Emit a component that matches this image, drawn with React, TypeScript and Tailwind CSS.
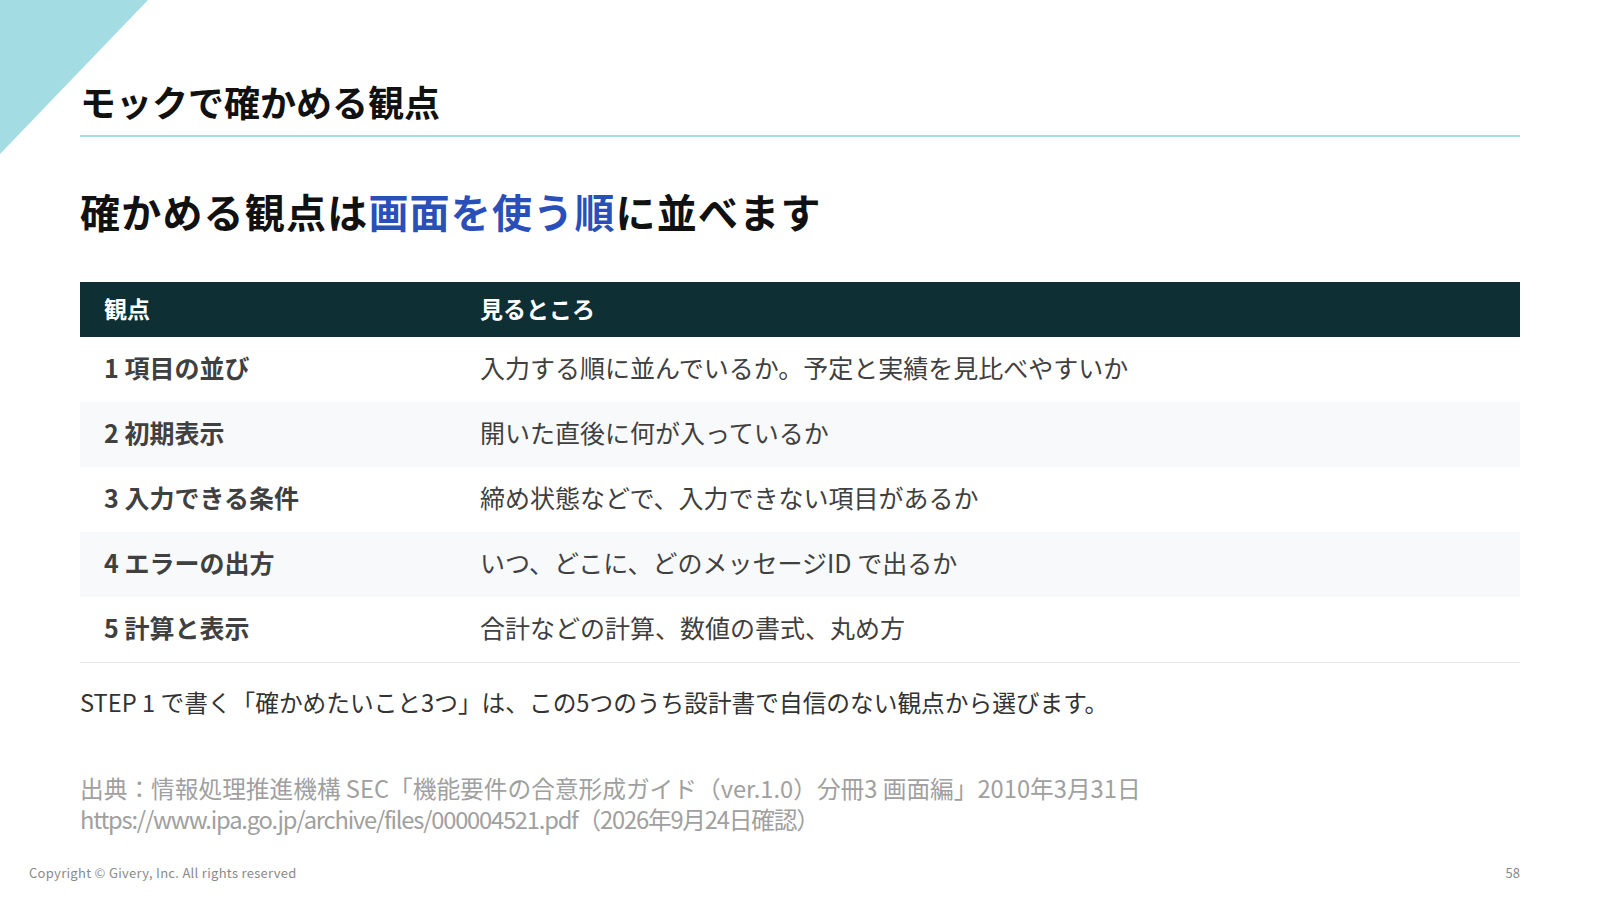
import React from "react";

const rows = [
  { label: "1 項目の並び", detail: "入力する順に並んでいるか。予定と実績を見比べやすいか" },
  { label: "2 初期表示", detail: "開いた直後に何が入っているか" },
  { label: "3 入力できる条件", detail: "締め状態などで、入力できない項目があるか" },
  { label: "4 エラーの出方", detail: "いつ、どこに、どのメッセージID で出るか" },
  { label: "5 計算と表示", detail: "合計などの計算、数値の書式、丸め方" },
];

export default function App() {
  return (
    <div
      className="relative w-[1600px] h-[900px] overflow-hidden bg-white flex flex-col"
      style={{ fontFamily: '"Noto Sans CJK JP", "Noto Sans", sans-serif' }}
    >
      {/* corner accent */}
      <svg className="absolute left-0 top-0" width="150" height="156" viewBox="0 0 150 156">
        <polygon points="0,0 148,0 0,154" fill="#a3dce3" />
      </svg>

      <div className="relative px-[80px] pt-[78px]">
        <h1 className="text-[36px] leading-[46px] font-bold text-[#111]">モックで確かめる観点</h1>
        <div className="mt-[11px] h-[2px] bg-[#aadbe3]" />

        <h2 className="mt-[50px] text-[40px] leading-[48px] font-bold text-[#111] tracking-[1.2px]">
          確かめる観点は<span className="text-[#2b4fb8]">画面を使う順</span>に並べます
        </h2>

        <div className="mt-[47px] border-b border-[#e6e8ea]">
          <div className="flex h-[55px] items-center pb-[2px] bg-[#0e2f33] text-white text-[23px] font-bold">
            <div className="w-[400px] pl-[24px]">観点</div>
            <div>見るところ</div>
          </div>
          {rows.map((r, i) => (
            <div
              key={r.label}
              className={`flex h-[65px] items-center pb-[4px] text-[25px] text-[#404040] ${i % 2 === 1 ? "bg-[#f8f9fa]" : "bg-white"}`}
            >
              <div className="w-[400px] pl-[24px] font-bold">{r.label}</div>
              <div>{r.detail}</div>
            </div>
          ))}
        </div>

        <p className="mt-[23px] text-[23.7px] leading-[32px] text-[#333]">
          STEP 1 で書く「確かめたいこと3つ」は、この5つのうち設計書で自信のない観点から選びます。
        </p>

        <div className="mt-[55px] text-[23.7px] leading-[31px] text-[#a0a0a0]">
          <p>出典：情報処理推進機構 SEC「機能要件の合意形成ガイド（ver.1.0）分冊3 画面編」2010年3月31日</p>
          <p className="tracking-[-1.2px]">https://www.ipa.go.jp/archive/files/000004521.pdf（2026年9月24日確認）</p>
        </div>
      </div>

      <div className="mt-auto flex items-center justify-between pl-[29px] pr-[80px] pb-[18px] text-[13px] text-[#8a8a8a]">
        <span className="tracking-[0.3px]">Copyright © Givery, Inc. All rights reserved</span>
        <span>58</span>
      </div>
    </div>
  );
}
